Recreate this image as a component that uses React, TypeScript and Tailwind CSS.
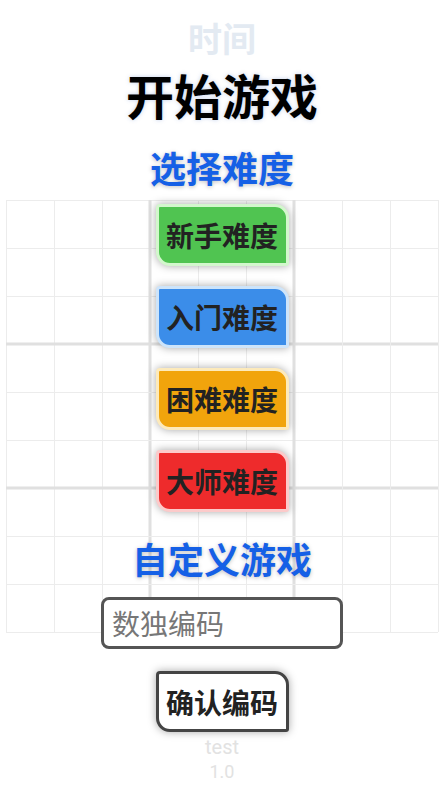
import React from "react";

const CJK = '"Noto Sans CJK SC", "Noto Sans", sans-serif';

function Board() {
  const lines: React.ReactElement[] = [];
  for (let i = 0; i <= 9; i++) {
    const p = i * 48 + 0.5;
    const thick = i === 3 || i === 6;
    lines.push(
      <line key={"v" + i} x1={thick ? i * 48 : p} y1={0} x2={thick ? i * 48 : p} y2={432} stroke={thick ? "#e0e0e0" : "#ececec"} strokeWidth={thick ? 3 : 1} />
    );
    lines.push(
      <line key={"h" + i} x1={0} y1={thick ? i * 48 : p} x2={432} y2={thick ? i * 48 : p} stroke={thick ? "#e0e0e0" : "#ececec"} strokeWidth={thick ? 3 : 1} />
    );
  }
  return (
    <svg className="absolute left-[6px] top-[200px]" width="433" height="433" viewBox="0 0 433 433">
      {lines}
    </svg>
  );
}

function DiffButton({ label, cls }: { label: string; cls: string }) {
  return (
    <button
      className={
        "w-[133px] h-[62px] border-[3px] rounded-tl-[4px] rounded-br-[3px] rounded-tr-[14px] rounded-bl-[14px] shadow-[0_0_9px_rgba(0,0,0,0.35)] text-[28px] font-bold leading-none text-[#222] flex items-center justify-center " +
        cls
      }
    >
      {label}
    </button>
  );
}

export default function App() {
  return (
    <div className="relative w-full h-[791px] bg-white overflow-hidden" style={{ fontFamily: CJK }}>
      <Board />
      <div className="relative flex flex-col items-center">
        <div className="mt-[21px] text-[34px] leading-none font-bold text-[#e3eaf2]">时间</div>
        <div className="mt-[15px] text-[48px] leading-none font-bold text-black [text-shadow:0_0_4px_rgba(80,120,200,0.35)]">开始游戏</div>
        <div className="mt-[31px] text-[36px] leading-none font-bold text-[#1560e6] [text-shadow:0_1px_4px_rgba(0,0,0,0.25)]">选择难度</div>
        <div className="mt-[19px] flex flex-col items-center gap-[20px]">
          <DiffButton label="新手难度" cls="bg-[#50c451] border-[#d3f7cd]" />
          <DiffButton label="入门难度" cls="bg-[#3b8de9] border-[#cde4fa]" />
          <DiffButton label="困难难度" cls="bg-[#f1a40c] border-[#fdeabb]" />
          <DiffButton label="大师难度" cls="bg-[#ee2b2c] border-[#fccaca]" />
        </div>
        <div className="mt-[28px] text-[36px] leading-none font-bold text-[#1560e6] [text-shadow:0_1px_4px_rgba(0,0,0,0.25)]">自定义游戏</div>
        <input
          className="mt-[21px] w-[242px] h-[52px] border-[3px] border-[#555] rounded-[8px] bg-white px-[8px] text-[28px] text-[#333] placeholder:text-[#777] outline-none"
          placeholder="数独编码"
          style={{ fontFamily: CJK }}
        />
        <button className="mt-[22px] w-[133px] h-[61px] border-[3px] border-[#444] bg-white rounded-tl-[4px] rounded-br-[3px] rounded-tr-[14px] rounded-bl-[14px] shadow-[0_0_9px_rgba(0,0,0,0.35)] text-[28px] font-bold leading-none text-[#222] flex items-center justify-center">
          确认编码
        </button>
        <div className="mt-[3px] text-[20px] leading-[24px] text-[#e2e2e2]" style={{ fontFamily: "Roboto, sans-serif" }}>test</div>
        <div className="mt-[1px] text-[18px] leading-[24px] text-[#e2e2e2]" style={{ fontFamily: "Roboto, sans-serif" }}>1.0</div>
      </div>
    </div>
  );
}
